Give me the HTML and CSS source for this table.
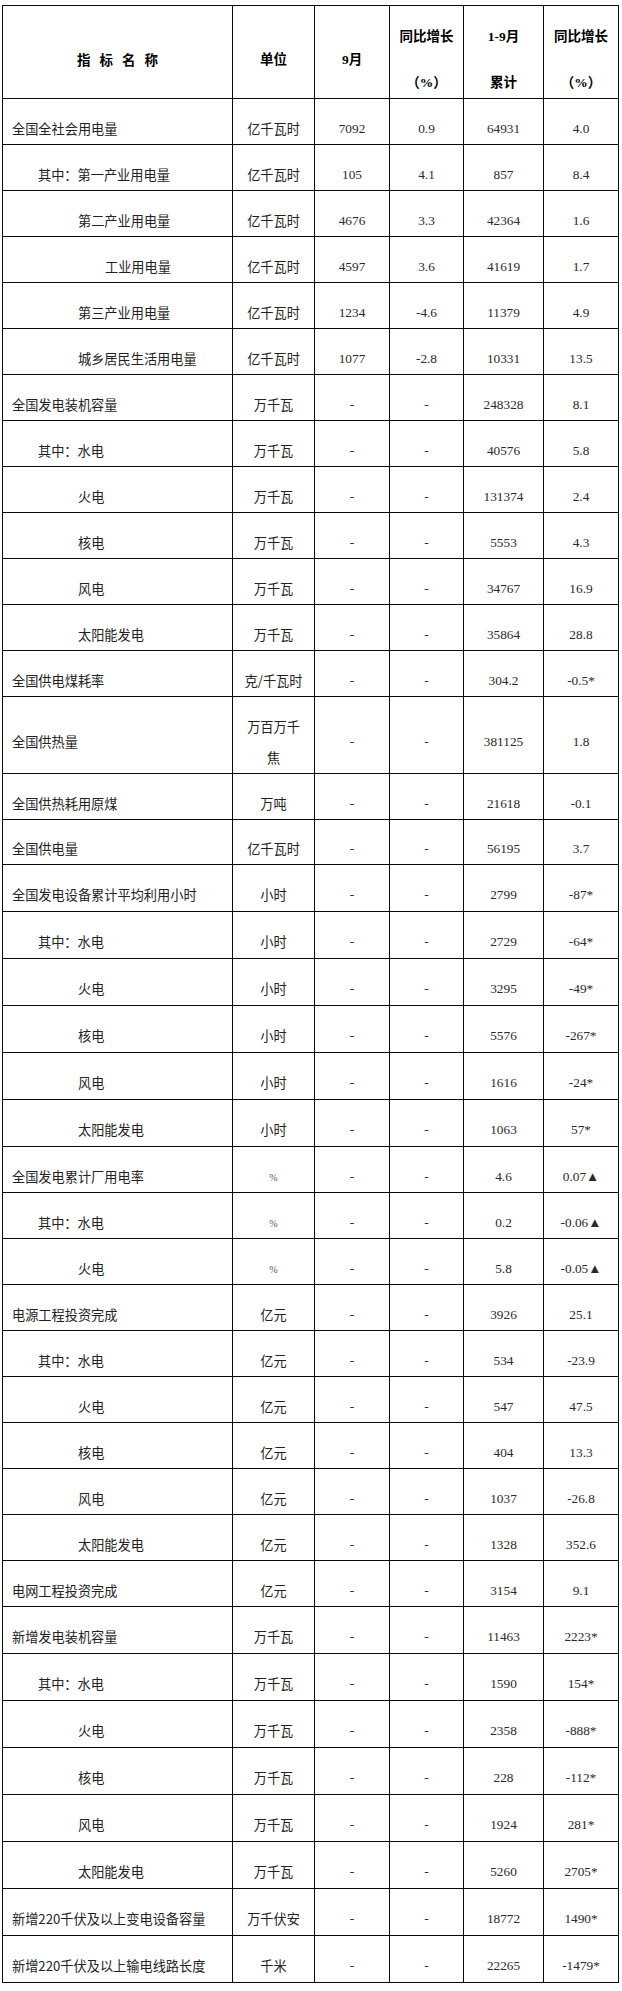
FILE: index.html
```html
<!DOCTYPE html>
<html lang="zh-CN">
<head>
<meta charset="utf-8">
<title>电力工业统计数据</title>
<link rel="stylesheet" href="styles.css">
</head>
<body>
<table class="stats">
  <colgroup>
    <col class="c-name"><col class="c-unit"><col class="c-m"><col class="c-my"><col class="c-cum"><col class="c-cy">
  </colgroup>
  <thead>
    <tr class="head">
      <th class="single"><span class="spaced">指 标 名 称</span></th>
      <th class="single">单位</th>
      <th class="single">9月</th>
      <th class="double"><div class="hl">同比增长</div><div class="hl">（%）</div></th>
      <th class="double"><div class="hl">1-9月</div><div class="hl">累计</div></th>
      <th class="double"><div class="hl">同比增长</div><div class="hl">（%）</div></th>
    </tr>
  </thead>
  <tbody>
    <tr><td class="name l0">全国全社会用电量</td><td class="unit">亿千瓦时</td><td class="num">7092</td><td class="num">0.9</td><td class="num">64931</td><td class="num">4.0</td></tr>
    <tr><td class="name l1">其中：第一产业用电量</td><td class="unit">亿千瓦时</td><td class="num">105</td><td class="num">4.1</td><td class="num">857</td><td class="num">8.4</td></tr>
    <tr><td class="name l2">第二产业用电量</td><td class="unit">亿千瓦时</td><td class="num">4676</td><td class="num">3.3</td><td class="num">42364</td><td class="num">1.6</td></tr>
    <tr><td class="name l3">工业用电量</td><td class="unit">亿千瓦时</td><td class="num">4597</td><td class="num">3.6</td><td class="num">41619</td><td class="num">1.7</td></tr>
    <tr><td class="name l2">第三产业用电量</td><td class="unit">亿千瓦时</td><td class="num">1234</td><td class="num">-4.6</td><td class="num">11379</td><td class="num">4.9</td></tr>
    <tr><td class="name l2">城乡居民生活用电量</td><td class="unit">亿千瓦时</td><td class="num">1077</td><td class="num">-2.8</td><td class="num">10331</td><td class="num">13.5</td></tr>
    <tr><td class="name l0">全国发电装机容量</td><td class="unit">万千瓦</td><td class="num">-</td><td class="num">-</td><td class="num">248328</td><td class="num">8.1</td></tr>
    <tr><td class="name l1">其中：水电</td><td class="unit">万千瓦</td><td class="num">-</td><td class="num">-</td><td class="num">40576</td><td class="num">5.8</td></tr>
    <tr><td class="name l2">火电</td><td class="unit">万千瓦</td><td class="num">-</td><td class="num">-</td><td class="num">131374</td><td class="num">2.4</td></tr>
    <tr><td class="name l2">核电</td><td class="unit">万千瓦</td><td class="num">-</td><td class="num">-</td><td class="num">5553</td><td class="num">4.3</td></tr>
    <tr><td class="name l2">风电</td><td class="unit">万千瓦</td><td class="num">-</td><td class="num">-</td><td class="num">34767</td><td class="num">16.9</td></tr>
    <tr><td class="name l2">太阳能发电</td><td class="unit">万千瓦</td><td class="num">-</td><td class="num">-</td><td class="num">35864</td><td class="num">28.8</td></tr>
    <tr><td class="name l0">全国供电煤耗率</td><td class="unit">克/千瓦时</td><td class="num">-</td><td class="num">-</td><td class="num">304.2</td><td class="num">-0.5*</td></tr>
    <tr class="tall"><td class="name l0">全国供热量</td><td class="unit two">万百万千<br>焦</td><td class="num">-</td><td class="num">-</td><td class="num">381125</td><td class="num">1.8</td></tr>
    <tr><td class="name l0">全国供热耗用原煤</td><td class="unit">万吨</td><td class="num">-</td><td class="num">-</td><td class="num">21618</td><td class="num">-0.1</td></tr>
    <tr class="short"><td class="name l0">全国供电量</td><td class="unit">亿千瓦时</td><td class="num">-</td><td class="num">-</td><td class="num">56195</td><td class="num">3.7</td></tr>
    <tr class="wide"><td class="name l0">全国发电设备累计平均利用小时</td><td class="unit">小时</td><td class="num">-</td><td class="num">-</td><td class="num">2799</td><td class="num">-87*</td></tr>
    <tr class="wide"><td class="name l1">其中：水电</td><td class="unit">小时</td><td class="num">-</td><td class="num">-</td><td class="num">2729</td><td class="num">-64*</td></tr>
    <tr class="wide"><td class="name l2">火电</td><td class="unit">小时</td><td class="num">-</td><td class="num">-</td><td class="num">3295</td><td class="num">-49*</td></tr>
    <tr class="wide"><td class="name l2">核电</td><td class="unit">小时</td><td class="num">-</td><td class="num">-</td><td class="num">5576</td><td class="num">-267*</td></tr>
    <tr class="wide"><td class="name l2">风电</td><td class="unit">小时</td><td class="num">-</td><td class="num">-</td><td class="num">1616</td><td class="num">-24*</td></tr>
    <tr class="wide"><td class="name l2">太阳能发电</td><td class="unit">小时</td><td class="num">-</td><td class="num">-</td><td class="num">1063</td><td class="num">57*</td></tr>
    <tr><td class="name l0">全国发电累计厂用电率</td><td class="unit"><span class="pct">%</span></td><td class="num">-</td><td class="num">-</td><td class="num">4.6</td><td class="num">0.07▲</td></tr>
    <tr><td class="name l1">其中：水电</td><td class="unit"><span class="pct">%</span></td><td class="num">-</td><td class="num">-</td><td class="num">0.2</td><td class="num">-0.06▲</td></tr>
    <tr><td class="name l2">火电</td><td class="unit"><span class="pct">%</span></td><td class="num">-</td><td class="num">-</td><td class="num">5.8</td><td class="num">-0.05▲</td></tr>
    <tr><td class="name l0">电源工程投资完成</td><td class="unit">亿元</td><td class="num">-</td><td class="num">-</td><td class="num">3926</td><td class="num">25.1</td></tr>
    <tr><td class="name l1">其中：水电</td><td class="unit">亿元</td><td class="num">-</td><td class="num">-</td><td class="num">534</td><td class="num">-23.9</td></tr>
    <tr><td class="name l2">火电</td><td class="unit">亿元</td><td class="num">-</td><td class="num">-</td><td class="num">547</td><td class="num">47.5</td></tr>
    <tr><td class="name l2">核电</td><td class="unit">亿元</td><td class="num">-</td><td class="num">-</td><td class="num">404</td><td class="num">13.3</td></tr>
    <tr><td class="name l2">风电</td><td class="unit">亿元</td><td class="num">-</td><td class="num">-</td><td class="num">1037</td><td class="num">-26.8</td></tr>
    <tr><td class="name l2">太阳能发电</td><td class="unit">亿元</td><td class="num">-</td><td class="num">-</td><td class="num">1328</td><td class="num">352.6</td></tr>
    <tr><td class="name l0">电网工程投资完成</td><td class="unit">亿元</td><td class="num">-</td><td class="num">-</td><td class="num">3154</td><td class="num">9.1</td></tr>
    <tr class="wide"><td class="name l0">新增发电装机容量</td><td class="unit">万千瓦</td><td class="num">-</td><td class="num">-</td><td class="num">11463</td><td class="num">2223*</td></tr>
    <tr class="wide"><td class="name l1">其中：水电</td><td class="unit">万千瓦</td><td class="num">-</td><td class="num">-</td><td class="num">1590</td><td class="num">154*</td></tr>
    <tr class="wide"><td class="name l2">火电</td><td class="unit">万千瓦</td><td class="num">-</td><td class="num">-</td><td class="num">2358</td><td class="num">-888*</td></tr>
    <tr class="wide"><td class="name l2">核电</td><td class="unit">万千瓦</td><td class="num">-</td><td class="num">-</td><td class="num">228</td><td class="num">-112*</td></tr>
    <tr class="wide"><td class="name l2">风电</td><td class="unit">万千瓦</td><td class="num">-</td><td class="num">-</td><td class="num">1924</td><td class="num">281*</td></tr>
    <tr class="wide"><td class="name l2">太阳能发电</td><td class="unit">万千瓦</td><td class="num">-</td><td class="num">-</td><td class="num">5260</td><td class="num">2705*</td></tr>
    <tr class="wide"><td class="name l0">新增220千伏及以上变电设备容量</td><td class="unit">万千伏安</td><td class="num">-</td><td class="num">-</td><td class="num">18772</td><td class="num">1490*</td></tr>
    <tr class="wide"><td class="name l0">新增220千伏及以上输电线路长度</td><td class="unit">千米</td><td class="num">-</td><td class="num">-</td><td class="num">22265</td><td class="num">-1479*</td></tr>
  </tbody>
</table>
</body>
</html>
```
FILE: styles.css
```css
html, body {
  margin: 0;
  padding: 0;
  background: #ffffff;
}

body {
  padding: 5px 0 0 2px;
  font-family: "Noto Sans CJK SC", sans-serif;
  color: #1c1c1c;
}

.stats {
  border-collapse: collapse;
  table-layout: fixed;
  width: 616px;
}

.c-name { width: 230px; }
.c-unit { width: 82px; }
.c-m { width: 75px; }
.c-my { width: 74px; }
.c-cum { width: 80px; }
.c-cy { width: 75px; }

.stats th,
.stats td {
  border: 1px solid #0a0a0a;
  padding: 14px 0 0 0;
  vertical-align: middle;
  line-height: 20px;
  white-space: nowrap;
}

.stats tr { height: 46px; }
.stats tr.wide { height: 47px; }
.stats tr.short { height: 45px; }
.stats tr.tall { height: 77px; }
.stats tr.head { height: 92px; }

/* header */
.stats th {
  font-family: "Liberation Serif", "Noto Sans CJK SC", serif;
  font-weight: 700;
  font-size: 13.5px;
  color: #000;
  text-align: center;
}

.stats th.single {
  padding-top: 16px;
}

.stats th.double {
  padding: 0;
}

.hl {
  line-height: 30px;
  margin-top: 16px;
}

.spaced {
  font-family: "Noto Sans CJK SC", sans-serif;
  word-spacing: 6px;
}

/* body */
.name {
  font-family: "Noto Sans CJK SC", sans-serif;
  font-weight: 400;
  font-size: 13.2px;
  text-align: left;
  color: #222;
}

.l0 { padding-left: 9px !important; }
.l1 { padding-left: 35px !important; }
.l2 { padding-left: 75px !important; }
.l3 { padding-left: 102px !important; }

.unit {
  font-family: "Noto Sans CJK SC", sans-serif;
  font-weight: 400;
  font-size: 13.2px;
  text-align: center;
  color: #222;
}

.unit.two {
  line-height: 31px;
  white-space: normal;
}

.pct {
  font-family: "Liberation Serif", serif;
  font-size: 10px;
  color: #555;
}

.num {
  font-family: "Liberation Serif", "DejaVu Sans", serif;
  font-size: 13.3px;
  text-align: center;
  color: #2a2a2a;
}
```
